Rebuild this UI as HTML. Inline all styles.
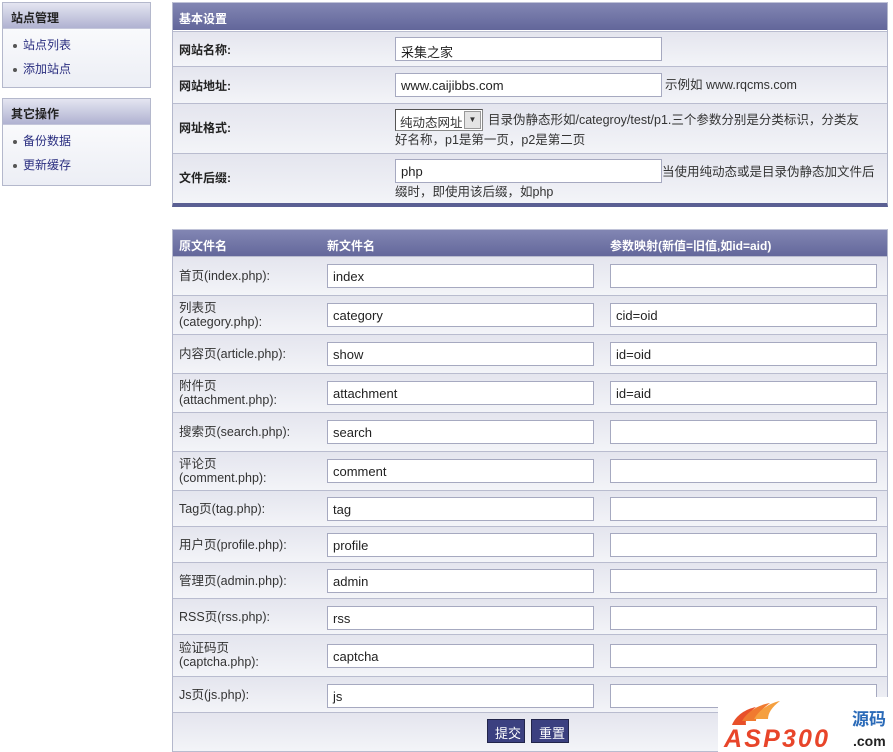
<!DOCTYPE html>
<html><head><meta charset="utf-8"><style>
*{margin:0;padding:0;box-sizing:border-box}
body{width:893px;height:752px;background:#fff;font-family:"Liberation Sans","Noto Sans CJK SC",sans-serif;font-size:12px;color:#333;position:relative;overflow:hidden}
.a{position:absolute}
.box{position:absolute;border:1px solid #b4b8cc;background:linear-gradient(#fff,#eceef5)}
.sh{height:26px;background:linear-gradient(#e4e5f1,#b0b2d1);border-bottom:1px solid #c4c6da;font-weight:bold;color:#222;padding:6px 0 0 8px;font-size:12px}
.sl{padding:4px 0 0 10px;line-height:24px;color:#2b2f80}
.sl span{display:inline-block;width:4px;height:4px;background:#555;border-radius:2px;margin-right:6px;vertical-align:middle}
.panel{position:absolute;left:172px;width:716px;border:1px solid #b4b8cc;border-top:1px solid #c0c3d8}
.ph{height:27px;background:linear-gradient(#8286b3,#62669a);color:#fff;font-weight:bold;padding:7px 0 0 6px}
.row{position:absolute;left:0;width:714px;border-top:1px solid #b9bccf;background:linear-gradient(#e4e5ee,#f3f4f8)}
.lb{position:absolute;left:6px;font-weight:bold;color:#222}
.l2{position:absolute;left:6px;color:#333;line-height:14px;font-size:12.5px}
.in{position:absolute;height:24px;background:#fff;border:1px solid #a6a9c0;padding:4px 0 0 5px;font-size:13px;color:#222}
.tx{position:absolute;font-size:12.5px;color:#333;line-height:20px}
.btn{position:absolute;top:719px;height:24px;background:#3b4080;color:#fff;border:1px solid #22254a;font-size:13px;padding:3px 0 0 7px;width:38px}
</style></head><body>

<div class="box" style="left:2px;top:2px;width:149px;height:86px"><div class="sh">站点管理</div><div class="sl"><span></span>站点列表<br><span></span>添加站点</div></div>
<div class="box" style="left:2px;top:98px;width:149px;height:88px"><div class="sh">其它操作</div><div class="sl"><span></span>备份数据<br><span></span>更新缓存</div></div>

<div class="panel" style="top:2px;height:205px;border-bottom:4px solid #5a5f93">
<div class="ph">基本设置</div>
<div class="row" style="top:28px;height:35px"><div class="lb" style="top:9px">网站名称:</div><div class="in" style="left:222px;top:5px;width:267px">采集之家</div></div>
<div class="row" style="top:63px;height:37px"><div class="lb" style="top:10px">网站地址:</div><div class="in" style="left:222px;top:6px;width:267px">www.caijibbs.com</div><div class="tx" style="left:492px;top:8px">示例如 www.rqcms.com</div></div>
<div class="row" style="top:100px;height:50px"><div class="lb" style="top:15px">网址格式:</div>
<div class="a" style="left:222px;top:5px;width:88px;height:22px;border:1px solid #888;border-top-color:#555;border-left-color:#555;background:#fff;padding:2px 0 0 4px;font-size:12.5px">纯动态网址<span class="a" style="right:1px;top:1px;width:17px;height:18px;background:#e4e4e4;border:1px solid #999;font-size:8px;text-align:center;line-height:16px">▼</span></div>
<div class="tx" style="left:222px;top:6px;width:466px;text-indent:93px">目录伪静态形如/categroy/test/p1.三个参数分别是分类标识，分类友好名称，p1是第一页，p2是第二页</div></div>
<div class="row" style="top:150px;height:50px"><div class="lb" style="top:15px">文件后缀:</div><div class="in" style="left:222px;top:5px;width:267px">php</div><div class="tx" style="left:489px;top:8px">当使用纯动态或是目录伪静态加文件后</div><div class="tx" style="left:222px;top:28px">缀时，即使用该后缀，如php</div></div>
</div>

<div class="panel" style="top:229px;height:523px;border-bottom:none">
<div class="ph" style="position:relative"><span>原文件名</span><span class="a" style="left:154px;top:7px">新文件名</span><span class="a" style="left:437px;top:7px">参数映射(新值=旧值,如id=aid)</span></div>
</div>

<div class="a" style="left:173px;top:256px;width:714px">
<div class="row" style="top:0;height:39px"><div class="l2" style="top:12px">首页(index.php):</div><div class="in" style="left:154px;top:7px;width:267px">index</div><div class="in" style="left:437px;top:7px;width:267px"></div></div>
<div class="row" style="top:39px;height:39px"><div class="l2" style="top:5px">列表页<br>(category.php):</div><div class="in" style="left:154px;top:7px;width:267px">category</div><div class="in" style="left:437px;top:7px;width:267px">cid=oid</div></div>
<div class="row" style="top:78px;height:39px"><div class="l2" style="top:12px">内容页(article.php):</div><div class="in" style="left:154px;top:7px;width:267px">show</div><div class="in" style="left:437px;top:7px;width:267px">id=oid</div></div>
<div class="row" style="top:117px;height:39px"><div class="l2" style="top:5px">附件页<br>(attachment.php):</div><div class="in" style="left:154px;top:7px;width:267px">attachment</div><div class="in" style="left:437px;top:7px;width:267px">id=aid</div></div>
<div class="row" style="top:156px;height:39px"><div class="l2" style="top:12px">搜索页(search.php):</div><div class="in" style="left:154px;top:7px;width:267px">search</div><div class="in" style="left:437px;top:7px;width:267px"></div></div>
<div class="row" style="top:195px;height:39px"><div class="l2" style="top:5px">评论页<br>(comment.php):</div><div class="in" style="left:154px;top:7px;width:267px">comment</div><div class="in" style="left:437px;top:7px;width:267px"></div></div>
<div class="row" style="top:234px;height:36px"><div class="l2" style="top:11px">Tag页(tag.php):</div><div class="in" style="left:154px;top:6px;width:267px">tag</div><div class="in" style="left:437px;top:6px;width:267px"></div></div>
<div class="row" style="top:270px;height:36px"><div class="l2" style="top:11px">用户页(profile.php):</div><div class="in" style="left:154px;top:6px;width:267px">profile</div><div class="in" style="left:437px;top:6px;width:267px"></div></div>
<div class="row" style="top:306px;height:36px"><div class="l2" style="top:11px">管理页(admin.php):</div><div class="in" style="left:154px;top:6px;width:267px">admin</div><div class="in" style="left:437px;top:6px;width:267px"></div></div>
<div class="row" style="top:342px;height:36px"><div class="l2" style="top:11px">RSS页(rss.php):</div><div class="in" style="left:154px;top:7px;width:267px">rss</div><div class="in" style="left:437px;top:7px;width:267px"></div></div>
<div class="row" style="top:378px;height:42px"><div class="l2" style="top:6px">验证码页<br>(captcha.php):</div><div class="in" style="left:154px;top:9px;width:267px">captcha</div><div class="in" style="left:437px;top:9px;width:267px"></div></div>
<div class="row" style="top:420px;height:36px"><div class="l2" style="top:11px">Js页(js.php):</div><div class="in" style="left:154px;top:7px;width:267px">js</div><div class="in" style="left:437px;top:7px;width:267px"></div></div>
<div class="row" style="top:456px;height:40px;border-bottom:1px solid #b9bccf"></div>
</div>
<div class="btn" style="left:487px">提交</div>
<div class="btn" style="left:531px">重置</div>

<div class="a" style="left:718px;top:697px;width:175px;height:55px;background:#fff">
<svg width="175" height="55" class="a" style="left:0;top:0">
<path d="M14 28 C18 18 28 12 38 10 C30 16 27 22 28 28 Z" fill="#e8502a"/>
<path d="M24 24 C30 14 40 8 52 6 C44 12 38 18 38 24 Z" fill="#f07a30"/>
<path d="M36 22 C42 12 52 6 62 4 C54 10 50 16 50 22 Z" fill="#f5a040"/>
<text x="6" y="50" font-family="Liberation Sans,sans-serif" font-weight="bold" font-style="italic" font-size="25" fill="#e8452a" textLength="104">ASP300</text>
<text x="134" y="28" font-family="Noto Sans CJK SC,sans-serif" font-weight="bold" font-size="17" fill="#2a6ab8">源码</text>
<text x="135" y="49" font-family="Liberation Sans,sans-serif" font-weight="bold" font-size="14" fill="#222">.com</text>
</svg></div>
</body></html>
